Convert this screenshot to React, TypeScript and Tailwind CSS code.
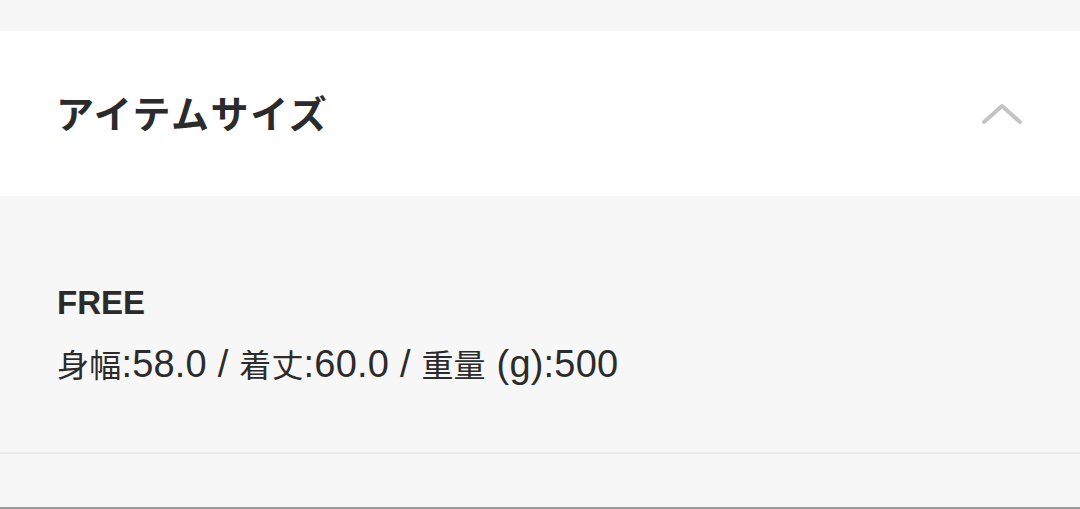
import React from 'react';

const font = { fontFamily: '"Liberation Sans", "Noto Sans CJK JP", sans-serif' };

const J = ({ children }: { children: React.ReactNode }) => (
  <span className="text-[32px]" style={{ fontFamily: '"Noto Sans CJK JP", sans-serif' }}>{children}</span>
);

export default function App() {
  return (
    <div className="w-[1080px] h-[509px] bg-[#f7f7f7] flex flex-col overflow-hidden" style={font}>
      {/* header */}
      <div className="mt-[31px] h-[165px] bg-white flex items-center justify-between pl-[56px] pr-[58px]">
        <h2 className="text-[38px] font-bold text-[#2b2b2b] tracking-[1.6px] leading-none -mt-[3px]" style={{ fontFamily: '"Noto Sans CJK JP", sans-serif' }}>アイテムサイズ</h2>
        <svg width="40" height="22" viewBox="0 0 40 22" fill="none">
          <path d="M2 19 L20 3 L38 19" stroke="#c4c4c4" strokeWidth="4" strokeLinecap="round" strokeLinejoin="round" />
        </svg>
      </div>

      {/* body */}
      <div className="h-[258px] pl-[57px] pt-[90px] text-[#2b2b2b] border-b-2 border-[#e9e9e9]">
        <p className="text-[33px] font-bold leading-none">FREE</p>
        <p className="mt-[26px] text-[38px] leading-none tracking-[0.2px] flex items-baseline whitespace-pre">
          <J>身幅</J>:58.0 / <J>着丈</J>:60.0 / <J>重量</J> (g):500
        </p>
      </div>

      <div className="flex-1" />
      <div className="h-[2px] bg-[#9a9a9a]" />
    </div>
  );
}
